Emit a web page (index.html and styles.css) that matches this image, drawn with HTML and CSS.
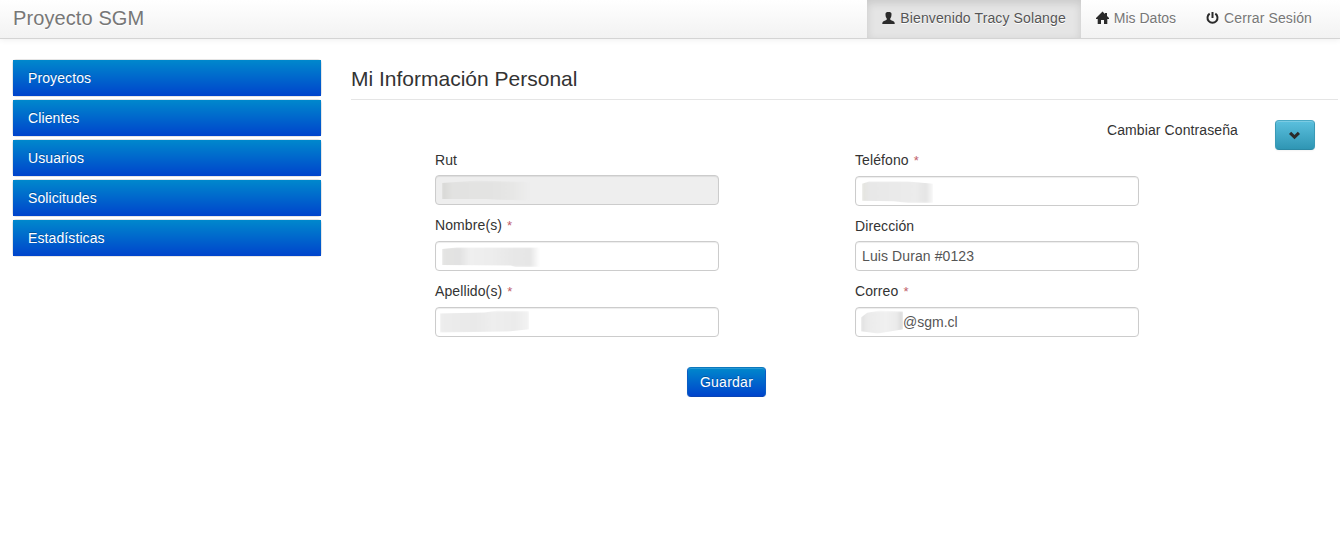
FILE: index.html
```html
<!DOCTYPE html>
<html lang="es">
<head>
<meta charset="utf-8">
<title>Proyecto SGM</title>
<link rel="stylesheet" href="styles.css">
</head>
<body>
<header class="navbar">
  <a class="brand">Proyecto SGM</a>
  <nav class="nav">
    <a class="nav-item active"><svg class="icon" viewBox="0 0 14 14"><path d="M3.500 3C3.500 1.500 4.500 1 6.500 1s3 .5 3 2c0 2-.2 3.300-1.200 4.300v1.500c.8.8 3.300 1 4 2.200.4.600.4 1.300.4 2H.300c0-.7 0-1.400.4-2 .7-1.200 3.200-1.400 4-2.200V7.300C3.700 6.300 3.500 5 3.500 3z"/></svg>Bienvenido Tracy Solange</a>
    <a class="nav-item datos"><svg class="icon" viewBox="0 0 14 14"><path d="M6.500 .6L9 3V2H11v3L13 7v1H11.300v5H8V9H5v4H1.700V8H0V7z"/></svg>Mis Datos</a>
    <a class="nav-item"><svg class="icon" viewBox="0 0 14 14"><path d="M3.700 2.700A5 5 0 1 0 9.300 2.700" fill="none" stroke="#2b2b2b" stroke-width="2"/><path d="M5.500 1h2v6h-2z"/></svg>Cerrar Sesión</a>
  </nav>
</header>
<div class="page">
  <aside class="sidebar">
    <div class="group"><a>Proyectos</a></div>
    <div class="group"><a>Clientes</a></div>
    <div class="group"><a>Usuarios</a></div>
    <div class="group"><a>Solicitudes</a></div>
    <div class="group"><a>Estadísticas</a></div>
  </aside>
  <main class="content">
    <h1 class="legend">Mi Información Personal</h1>
    <div class="password-row">
      <span class="password-label">Cambiar Contraseña</span>
      <button class="btn-info" aria-label="Mostrar"><svg class="icon" viewBox="0 0 14 14"><path d="M1 6L3.200 3.800 6.500 7l3.300-3.200L12 6 6.500 11.300z"/></svg></button>
    </div>
    <form class="form">
      <div class="columns">
        <div class="column">
          <div class="field short"><label>Rut</label><div class="input disabled"><span class="mask m-rut"></span></div></div>
          <div class="field"><label>Nombre(s) <b>*</b></label><div class="input"><span class="mask m-nombre"></span></div></div>
          <div class="field"><label>Apellido(s) <b>*</b></label><div class="input"><span class="mask m-apellido"></span></div></div>
        </div>
        <div class="column">
          <div class="field"><label>Teléfono <b>*</b></label><div class="input"><span class="mask m-telefono"></span></div></div>
          <div class="field short"><label>Dirección</label><div class="input">Luis Duran #0123</div></div>
          <div class="field"><label>Correo <b>*</b></label><div class="input correo"><span class="mask m-correo"></span>@sgm.cl</div></div>
        </div>
      </div>
      <button class="btn-primary" type="button">Guardar</button>
    </form>
  </main>
</div>
</body>
</html>
```
FILE: styles.css
```css
* { box-sizing: border-box; }
body {
  margin: 0;
  background: #fff;
  color: #333;
  font: 14px/20px "Liberation Sans", Arial, sans-serif;
  letter-spacing: .1px;
  overflow: hidden;
}
.navbar {
  display: flex;
  justify-content: space-between;
  height: 39px;
  padding: 0 13px;
  border-bottom: 1px solid #d4d4d4;
  background: linear-gradient(#fff, #f2f2f2);
  box-shadow: 0 1px 6px rgba(0, 0, 0, .065);
}
.brand {
  color: #777;
  font-size: 20px;
  line-height: 20px;
  padding-top: 8px;
  text-shadow: 0 1px 0 #fff;
}
.nav { display: flex; }
.nav-item {
  display: flex;
  padding: 8px 15px 10px;
  color: #777;
  letter-spacing: .12px;
  text-shadow: 0 1px 0 #fff;
  white-space: nowrap;
}
.nav-item.datos { letter-spacing: 0; }
.nav-item.active {
  background: #e5e5e5;
  color: #555;
  box-shadow: inset 0 3px 8px rgba(0, 0, 0, .125);
}
.icon {
  display: block;
  width: 14px;
  height: 14px;
  fill: #2b2b2b;
}
.nav-item .icon { margin: 3px 4px 0 0; }
.page { display: flex; padding: 20px 2px 0 12px; }
.sidebar { width: 310px; margin-right: 29px; }
.group {
  height: 38px;
  margin-bottom: 2px;
  border: 1px solid #e5e5e5;
  border-radius: 4px;
}
.group a {
  display: block;
  height: 36px;
  padding: 8px 15px;
  color: #fff;
  background: linear-gradient(#08c, #04c);
  text-shadow: 0 -1px 0 rgba(0, 0, 0, .25);
}
.content { flex: 1; }
.legend {
  height: 41px;
  margin: 0;
  border-bottom: 1px solid #e5e5e5;
  font-size: 21px;
  font-weight: normal;
  letter-spacing: 0;
  line-height: 40px;
}
.password-row {
  display: flex;
  justify-content: flex-end;
  height: 50px;
  padding: 20px 23px 0 0;
}
.password-label { margin-right: 37px; }
.btn-info {
  width: 40px;
  height: 30px;
  padding: 0 0 0 12px;
  border: 1px solid #2f96b4;
  border-color: #4aa9c5 #3a9ab6 #2a88a4;
  border-radius: 4px;
  background: linear-gradient(#5bc0de, #2f96b4);
  box-shadow: inset 0 1px 0 rgba(255, 255, 255, .2), 0 1px 2px rgba(0, 0, 0, .05);
}
.columns { display: flex; gap: 136px; padding-left: 84px; }
.column { width: 284px; }
.field { height: 66px; }
.field label { display: block; height: 26px; }
.field.short { height: 65px; }
.short label { height: 25px; }
.field b { margin-left: 1px; color: #c0606a; font-size: 13px; line-height: 1; font-weight: normal; }
.input {
  display: flex;
  align-items: center;
  height: 30px;
  padding: 0 6px;
  border: 1px solid #ccc;
  border-radius: 4px;
  color: #555;
  box-shadow: inset 0 1px 1px rgba(0, 0, 0, .075);
}
.input.disabled { background: #eee; }
.input.correo { letter-spacing: 0; }
.mask { flex: none; height: 20px; filter: blur(.8px); }
.m-rut {
  width: 88px;
  margin-top: 1px;
  background: linear-gradient(90deg, #d8d8d5, #e2e2e1 12%, #e4e4e3 65%, #e7e7e6 80%, #eee);
  clip-path: polygon(0 12%, 40% 0, 100% 8%, 100% 100%, 65% 96%, 50% 92%, 0 92%);
}
.m-nombre {
  width: 98px;
  margin-top: 2px;
  background: linear-gradient(90deg, #e4e4e3, #e2e2e2 18%, #efefef 28%, #ededed 50%, #e8e8e8 70%, #e6e6e6 90%, #fff);
  clip-path: polygon(0 10%, 15% 3%, 100% 2%, 100% 100%, 75% 100%, 70% 92%, 0 90%);
}
.m-apellido {
  width: 89px;
  height: 22px;
  margin: -1px 0 0 -2px;
  background: linear-gradient(90deg, #ededed, #e9e9e9 40%, #eee 60%, #ebebeb 85%, #f3f3f3);
  clip-path: polygon(0 14%, 50% 9%, 65% 0, 100% 2%, 100% 85%, 75% 96%, 0 100%);
}
.m-telefono {
  width: 71px;
  height: 22px;
  margin-top: 2px;
  background: linear-gradient(90deg, #e4e4df, #e8e8e8 12%, #ececec 75%, #e5e5e5 90%, #f8f8f8);
  clip-path: polygon(0 12%, 10% 2%, 65% 2%, 100% 12%, 100% 100%, 65% 100%, 45% 92%, 0 90%);
}
.m-correo {
  width: 42px;
  height: 23px;
  margin-left: -1px;
  background: linear-gradient(90deg, #e0e0e0, #ebebeb 15%, #f0f0f0 60%, #ebebeb 85%, #d8d8d8);
  clip-path: polygon(0 30%, 15% 10%, 45% 0, 100% 4%, 100% 82%, 40% 100%, 0 90%);
}
.btn-primary {
  display: block;
  width: 79px;
  height: 30px;
  margin: 20px 0 0 336px;
  padding: 0 0 1px;
  border: 1px solid #04c;
  border-color: #0c78bd #0a5cc4 #0a44b4;
  border-radius: 4px;
  color: #fff;
  background: linear-gradient(#08c, #04c);
  box-shadow: inset 0 1px 0 rgba(255, 255, 255, .15), 0 1px 2px rgba(0, 0, 0, .05);
  font: 14px/20px "Liberation Sans", Arial, sans-serif;
  letter-spacing: .25px;
  text-shadow: 0 -1px 0 rgba(0, 0, 0, .25);
}
```
